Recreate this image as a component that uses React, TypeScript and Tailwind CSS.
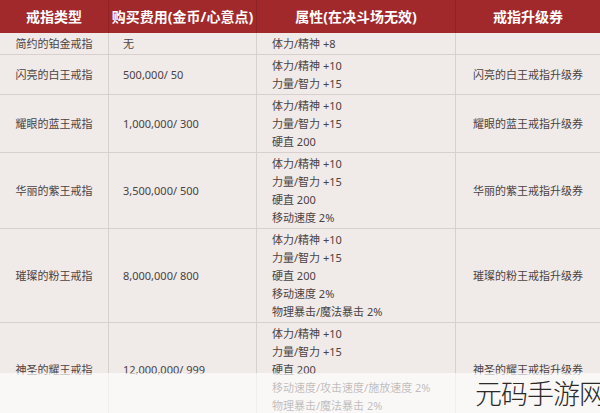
import React from "react";

const rows = [
  { name: "简约的铂金戒指", cost: "无", attrs: ["体力/精神 +8"], ticket: "" },
  { name: "闪亮的白王戒指", cost: "500,000/ 50", attrs: ["体力/精神 +10", "力量/智力 +15"], ticket: "闪亮的白王戒指升级券" },
  { name: "耀眼的蓝王戒指", cost: "1,000,000/ 300", attrs: ["体力/精神 +10", "力量/智力 +15", "硬直 200"], ticket: "耀眼的蓝王戒指升级券" },
  { name: "华丽的紫王戒指", cost: "3,500,000/ 500", attrs: ["体力/精神 +10", "力量/智力 +15", "硬直 200", "移动速度 2%"], ticket: "华丽的紫王戒指升级券" },
  { name: "璀璨的粉王戒指", cost: "8,000,000/ 800", attrs: ["体力/精神 +10", "力量/智力 +15", "硬直 200", "移动速度 2%", "物理暴击/魔法暴击 2%"], ticket: "璀璨的粉王戒指升级券" },
  { name: "神圣的耀王戒指", cost: "12,000,000/ 999", attrs: ["体力/精神 +10", "力量/智力 +15", "硬直 200", "移动速度/攻击速度/施放速度 2%", "物理暴击/魔法暴击 2%"], ticket: "神圣的耀王戒指升级券" },
];

export default function App() {
  return (
    <div
      className="relative w-[600px] h-[413px] overflow-hidden bg-[#f0eae9] text-[#4a4343]"
      style={{ fontFamily: '"Noto Sans", "Noto Sans CJK SC", sans-serif' }}
    >
      <div className="grid grid-cols-[109px_148px_199px_144px] h-[33px] bg-[#a2292b] text-white font-bold text-[14px] items-center">
        <div className="text-center border-r border-[#8e2224] h-full flex items-center justify-center">戒指类型</div>
        <div className="text-center border-r border-[#8e2224] h-full flex items-center justify-center">购买费用(金币/心意点)</div>
        <div className="text-center border-r border-[#8e2224] h-full flex items-center justify-center">属性(在决斗场无效)</div>
        <div className="text-center h-full flex items-center justify-center">戒指升级券</div>
      </div>
      {rows.map((r, i) => (
        <div key={i} className="grid grid-cols-[109px_148px_199px_144px] border-b border-[#d8d0cf] text-[11px] leading-[18px]">
          <div className="border-r border-[#d8d0cf] flex items-center justify-center pt-[2px] pb-[1px]">{r.name}</div>
          <div className="border-r border-[#d8d0cf] flex items-center pl-[14px] pt-[2px] pb-[1px]">{r.cost}</div>
          <div className="border-r border-[#d8d0cf] flex flex-col justify-center pl-[15px] pt-[2px] pb-[1px]">
            {r.attrs.map((a, j) => (
              <div key={j}>{a}</div>
            ))}
          </div>
          <div className="flex items-center justify-center pt-[2px] pb-[1px]">{r.ticket}</div>
        </div>
      ))}
      <div className="absolute left-0 right-0 top-[373px] bottom-0 bg-white/65" />
      <div
        className="absolute left-[475px] top-[379px] text-[27px] leading-[28px] font-light text-[#2a2a2a] whitespace-nowrap tracking-[-1px]"
        style={{ fontFamily: '"Noto Sans CJK SC", sans-serif' }}
      >
        元码手游网
      </div>
    </div>
  );
}
